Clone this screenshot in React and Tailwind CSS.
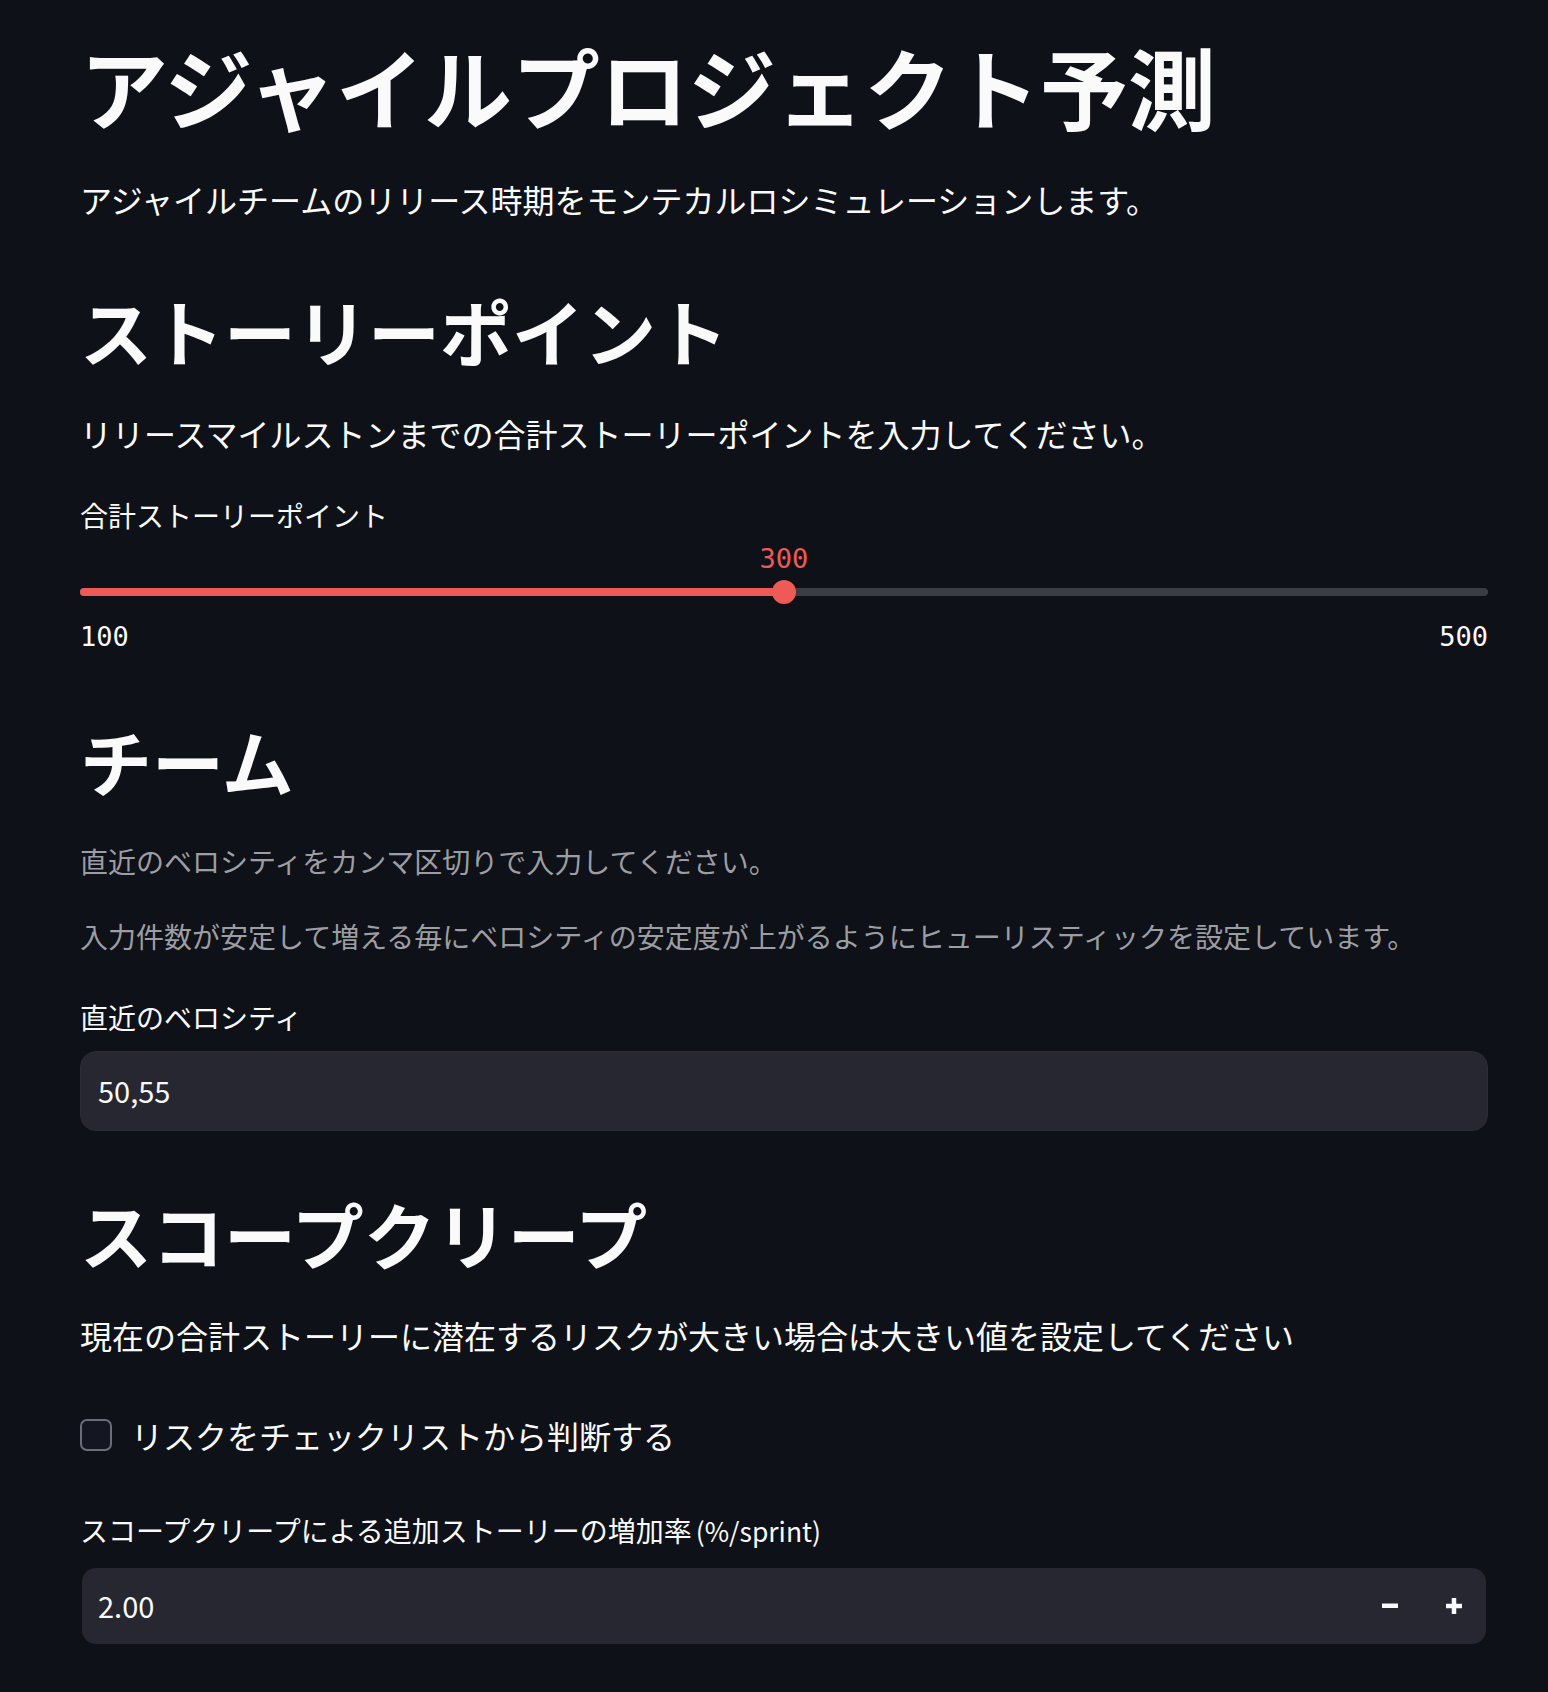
import React from "react";

function Minus() {
  return (
    <svg width="16" height="16" viewBox="0 0 16 16" fill="#fafafa">
      <rect x="0" y="5.5" width="16" height="4.5" />
    </svg>
  );
}
function Plus() {
  return (
    <svg width="16" height="16" viewBox="0 0 16 16" fill="#fafafa">
      <rect x="0" y="5.75" width="16" height="4.5" />
      <rect x="5.75" y="0" width="4.5" height="16" />
    </svg>
  );
}

export default function App() {
  const min = 100;
  const max = 500;
  const value = 300;
  const pct = ((value - min) / (max - min)) * 100;

  return (
    <div className="min-h-[1692px] w-full bg-[#0e1117] text-[#fafafa] font-['Noto_Sans_CJK_JP','Noto_Sans',sans-serif]">
      <div className="ml-[80px] w-[1408px] pt-[32px] flex flex-col">
        <h1 className="text-[88px] leading-[106px] font-bold whitespace-nowrap">
          アジャイルプロジェクト予測
        </h1>
        <p className="mt-[37px] text-[32px] leading-[48px] whitespace-nowrap">
          アジャイルチームのリリース時期をモンテカルロシミュレーションします。
        </p>

        <h2 className="mt-[64px] text-[72px] leading-[86px] font-bold whitespace-nowrap">
          ストーリーポイント
        </h2>
        <p className="mt-[36px] text-[32px] leading-[48px] whitespace-nowrap">
          リリースマイルストンまでの合計ストーリーポイントを入力してください。
        </p>

        <label className="mt-[38px] text-[28px] leading-[40px] whitespace-nowrap">
          合計ストーリーポイント
        </label>
        <div className="mt-[6px] flex flex-col">
          <div className="relative h-[36px]">
            <span
              className="absolute top-0 -translate-x-1/2 text-[27px] leading-[36px] text-[#ee5a55] font-['DejaVu_Sans_Mono',monospace]"
              style={{ left: `${pct}%` }}
            >
              {value}
            </span>
          </div>
          <div className="relative mt-[3px] h-[24px] flex items-center">
            <div className="w-full h-[8px] rounded-full bg-[#3b3d45]" />
            <div
              className="absolute left-0 top-[8px] h-[8px] rounded-full bg-[#ee5a55]"
              style={{ width: `${pct}%` }}
            />
            <div
              className="absolute top-0 w-[24px] h-[24px] rounded-full bg-[#ee5a55]"
              style={{ left: `calc(${pct}% - 12px)` }}
            />
          </div>
          <div className="mt-[15px] flex justify-between text-[27px] leading-[36px] font-['DejaVu_Sans_Mono',monospace]">
            <span>{min}</span>
            <span>{max}</span>
          </div>
        </div>

        <h2 className="mt-[62px] text-[72px] leading-[86px] font-bold whitespace-nowrap">
          チーム
        </h2>
        <p className="mt-[38px] text-[28px] leading-[40px] text-[#9d9ea3] whitespace-nowrap">
          直近のベロシティをカンマ区切りで入力してください。
        </p>
        <p className="mt-[35px] text-[28px] leading-[40px] text-[#9d9ea3] whitespace-nowrap">
          入力件数が安定して増える毎にベロシティの安定度が上がるようにヒューリスティックを設定しています。
        </p>
        <label className="mt-[41px] text-[28px] leading-[40px] whitespace-nowrap">
          直近のベロシティ
        </label>
        <div className="mt-[14px] h-[80px] rounded-[16px] bg-[#262730] border border-[#2b2c35] flex items-center pl-[17px] text-[29px]">
          50,55
        </div>

        <h2 className="mt-[59px] text-[72px] leading-[86px] font-bold whitespace-nowrap">
          スコープクリープ
        </h2>
        <p className="mt-[35px] text-[32px] leading-[48px] whitespace-nowrap">
          現在の合計ストーリーに潜在するリスクが大きい場合は大きい値を設定してください
        </p>

        <div className="mt-[52px] h-[48px] flex items-center gap-[19px]">
          <div className="w-[32px] h-[32px] rounded-[7px] border-2 border-[#6b6e76] bg-[#141722]" />
          <span className="text-[32px] leading-[48px] whitespace-nowrap">
            リスクをチェックリストから判断する
          </span>
        </div>

        <label className="mt-[51px] text-[28px] leading-[40px] whitespace-nowrap">
          スコープクリープによる追加ストーリーの増加率
          <span className="ml-[-2px] text-[26.5px]"> (%/sprint)</span>
        </label>
        <div className="mt-[17px] mx-[2px] h-[76px] rounded-[14px] bg-[#262730] flex items-center">
          <div className="flex-1 pl-[16px] text-[29px]">2.00</div>
          <div className="w-[64px] h-full flex items-center justify-center">
            <Minus />
          </div>
          <div className="w-[64px] h-full flex items-center justify-center">
            <Plus />
          </div>
        </div>
      </div>
    </div>
  );
}
